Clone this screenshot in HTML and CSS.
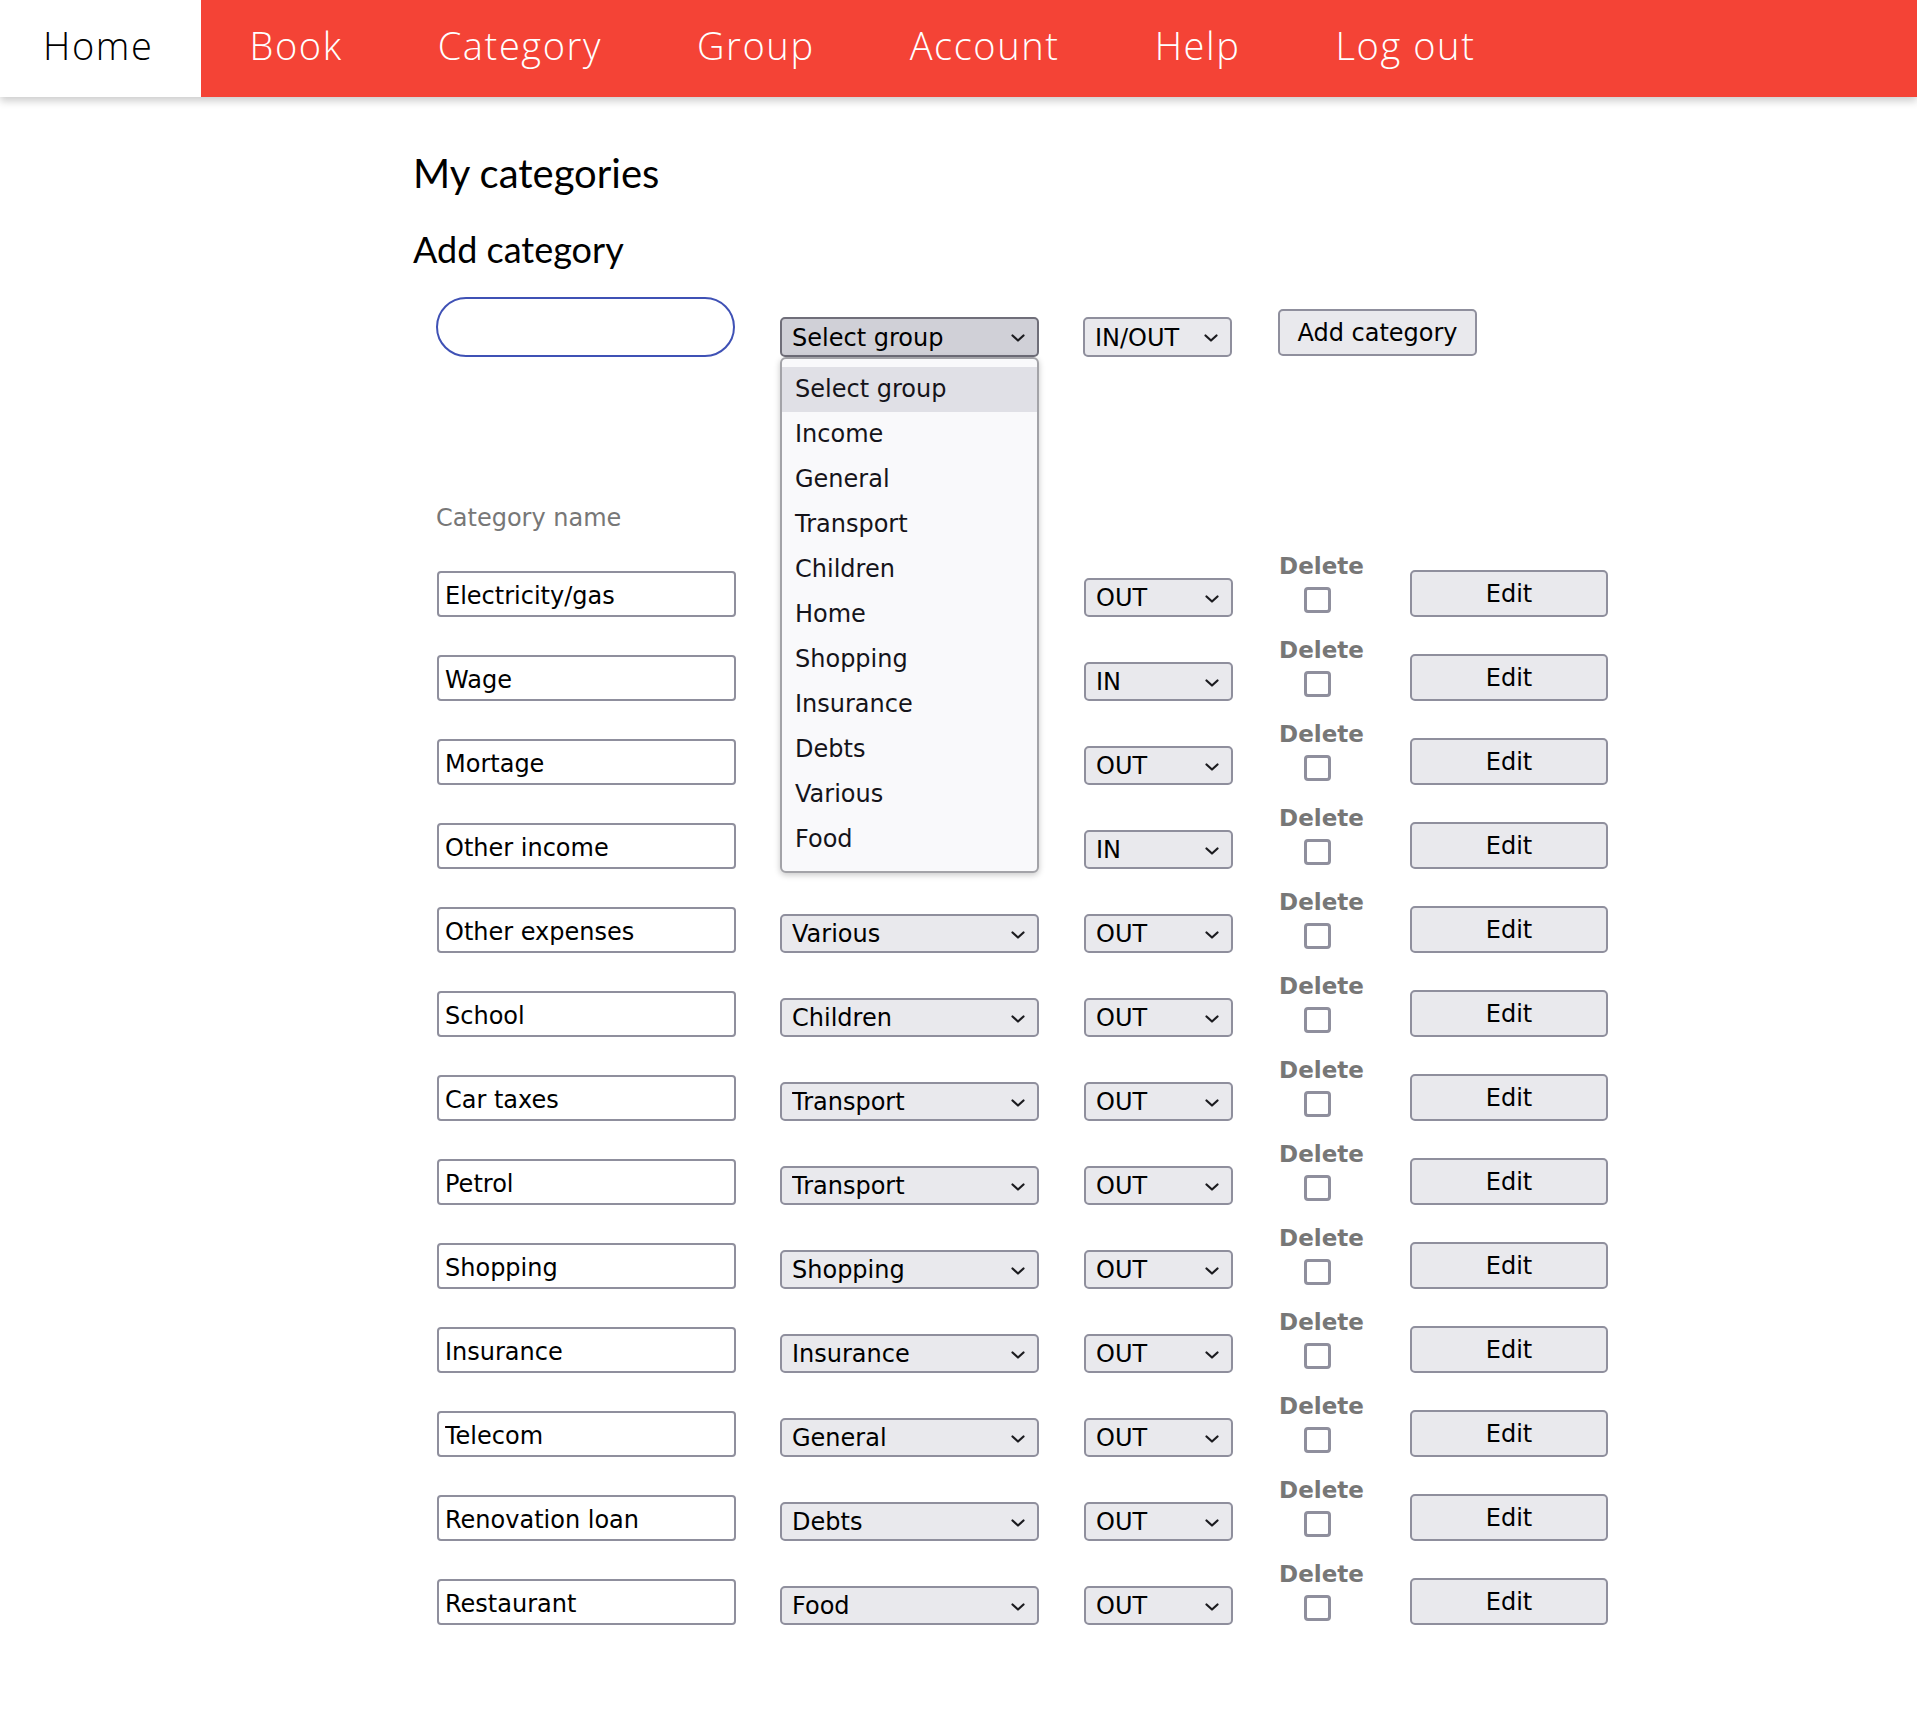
FILE: index.html
```html
<!DOCTYPE html>
<html lang="en">
<head>
<meta charset="utf-8">
<title>My categories</title>
<link rel="stylesheet" href="styles.css">
</head>
<body>
<nav class="topnav">
  <a class="nav-item nav-item--active" href="#">Home</a>
  <a class="nav-item" href="#">Book</a>
  <a class="nav-item" href="#">Category</a>
  <a class="nav-item" href="#">Group</a>
  <a class="nav-item" href="#">Account</a>
  <a class="nav-item" href="#">Help</a>
  <a class="nav-item" href="#">Log out</a>
</nav>

<main class="container">
  <h1 class="page-title">My categories</h1>
  <h2 class="section-title">Add category</h2>

  <form class="add-row">
    <input class="add-name" type="text">
    <div class="select-wrap select-wrap--group">
      <select class="select select--active"><option>Select group</option></select>
      <svg class="chevron" viewBox="0 0 14 8"><polyline points="1.5,1.5 7,6.5 12.5,1.5"/></svg>
      <ul class="dropdown">
        <li class="dropdown-item dropdown-item--hover">Select group</li>
        <li class="dropdown-item">Income</li>
        <li class="dropdown-item">General</li>
        <li class="dropdown-item">Transport</li>
        <li class="dropdown-item">Children</li>
        <li class="dropdown-item">Home</li>
        <li class="dropdown-item">Shopping</li>
        <li class="dropdown-item">Insurance</li>
        <li class="dropdown-item">Debts</li>
        <li class="dropdown-item">Various</li>
        <li class="dropdown-item">Food</li>
      </ul>
    </div>
    <div class="select-wrap select-wrap--inout">
      <select class="select"><option>IN/OUT</option></select>
      <svg class="chevron" viewBox="0 0 14 8"><polyline points="1.5,1.5 7,6.5 12.5,1.5"/></svg>
    </div>
    <button class="btn btn--add" type="button">Add category</button>
  </form>

  <div class="col-label">Category name</div>

  <div class="cat-list">
    <div class="cat-row">
      <input class="cat-name" type="text" value="Electricity/gas">
      <div class="select-wrap select-wrap--group"><select class="select"><option>Home</option></select><svg class="chevron" viewBox="0 0 14 8"><polyline points="1.5,1.5 7,6.5 12.5,1.5"/></svg></div>
      <div class="select-wrap select-wrap--inout"><select class="select"><option>OUT</option></select><svg class="chevron" viewBox="0 0 14 8"><polyline points="1.5,1.5 7,6.5 12.5,1.5"/></svg></div>
      <label class="delete-col"><span class="delete-label">Delete</span><input class="checkbox" type="checkbox"></label>
      <button class="btn btn--edit" type="button">Edit</button>
    </div>
    <div class="cat-row">
      <input class="cat-name" type="text" value="Wage">
      <div class="select-wrap select-wrap--group"><select class="select"><option>Income</option></select><svg class="chevron" viewBox="0 0 14 8"><polyline points="1.5,1.5 7,6.5 12.5,1.5"/></svg></div>
      <div class="select-wrap select-wrap--inout"><select class="select"><option>IN</option></select><svg class="chevron" viewBox="0 0 14 8"><polyline points="1.5,1.5 7,6.5 12.5,1.5"/></svg></div>
      <label class="delete-col"><span class="delete-label">Delete</span><input class="checkbox" type="checkbox"></label>
      <button class="btn btn--edit" type="button">Edit</button>
    </div>
    <div class="cat-row">
      <input class="cat-name" type="text" value="Mortage">
      <div class="select-wrap select-wrap--group"><select class="select"><option>Home</option></select><svg class="chevron" viewBox="0 0 14 8"><polyline points="1.5,1.5 7,6.5 12.5,1.5"/></svg></div>
      <div class="select-wrap select-wrap--inout"><select class="select"><option>OUT</option></select><svg class="chevron" viewBox="0 0 14 8"><polyline points="1.5,1.5 7,6.5 12.5,1.5"/></svg></div>
      <label class="delete-col"><span class="delete-label">Delete</span><input class="checkbox" type="checkbox"></label>
      <button class="btn btn--edit" type="button">Edit</button>
    </div>
    <div class="cat-row">
      <input class="cat-name" type="text" value="Other income">
      <div class="select-wrap select-wrap--group"><select class="select"><option>Income</option></select><svg class="chevron" viewBox="0 0 14 8"><polyline points="1.5,1.5 7,6.5 12.5,1.5"/></svg></div>
      <div class="select-wrap select-wrap--inout"><select class="select"><option>IN</option></select><svg class="chevron" viewBox="0 0 14 8"><polyline points="1.5,1.5 7,6.5 12.5,1.5"/></svg></div>
      <label class="delete-col"><span class="delete-label">Delete</span><input class="checkbox" type="checkbox"></label>
      <button class="btn btn--edit" type="button">Edit</button>
    </div>
    <div class="cat-row">
      <input class="cat-name" type="text" value="Other expenses">
      <div class="select-wrap select-wrap--group"><select class="select"><option>Various</option></select><svg class="chevron" viewBox="0 0 14 8"><polyline points="1.5,1.5 7,6.5 12.5,1.5"/></svg></div>
      <div class="select-wrap select-wrap--inout"><select class="select"><option>OUT</option></select><svg class="chevron" viewBox="0 0 14 8"><polyline points="1.5,1.5 7,6.5 12.5,1.5"/></svg></div>
      <label class="delete-col"><span class="delete-label">Delete</span><input class="checkbox" type="checkbox"></label>
      <button class="btn btn--edit" type="button">Edit</button>
    </div>
    <div class="cat-row">
      <input class="cat-name" type="text" value="School">
      <div class="select-wrap select-wrap--group"><select class="select"><option>Children</option></select><svg class="chevron" viewBox="0 0 14 8"><polyline points="1.5,1.5 7,6.5 12.5,1.5"/></svg></div>
      <div class="select-wrap select-wrap--inout"><select class="select"><option>OUT</option></select><svg class="chevron" viewBox="0 0 14 8"><polyline points="1.5,1.5 7,6.5 12.5,1.5"/></svg></div>
      <label class="delete-col"><span class="delete-label">Delete</span><input class="checkbox" type="checkbox"></label>
      <button class="btn btn--edit" type="button">Edit</button>
    </div>
    <div class="cat-row">
      <input class="cat-name" type="text" value="Car taxes">
      <div class="select-wrap select-wrap--group"><select class="select"><option>Transport</option></select><svg class="chevron" viewBox="0 0 14 8"><polyline points="1.5,1.5 7,6.5 12.5,1.5"/></svg></div>
      <div class="select-wrap select-wrap--inout"><select class="select"><option>OUT</option></select><svg class="chevron" viewBox="0 0 14 8"><polyline points="1.5,1.5 7,6.5 12.5,1.5"/></svg></div>
      <label class="delete-col"><span class="delete-label">Delete</span><input class="checkbox" type="checkbox"></label>
      <button class="btn btn--edit" type="button">Edit</button>
    </div>
    <div class="cat-row">
      <input class="cat-name" type="text" value="Petrol">
      <div class="select-wrap select-wrap--group"><select class="select"><option>Transport</option></select><svg class="chevron" viewBox="0 0 14 8"><polyline points="1.5,1.5 7,6.5 12.5,1.5"/></svg></div>
      <div class="select-wrap select-wrap--inout"><select class="select"><option>OUT</option></select><svg class="chevron" viewBox="0 0 14 8"><polyline points="1.5,1.5 7,6.5 12.5,1.5"/></svg></div>
      <label class="delete-col"><span class="delete-label">Delete</span><input class="checkbox" type="checkbox"></label>
      <button class="btn btn--edit" type="button">Edit</button>
    </div>
    <div class="cat-row">
      <input class="cat-name" type="text" value="Shopping">
      <div class="select-wrap select-wrap--group"><select class="select"><option>Shopping</option></select><svg class="chevron" viewBox="0 0 14 8"><polyline points="1.5,1.5 7,6.5 12.5,1.5"/></svg></div>
      <div class="select-wrap select-wrap--inout"><select class="select"><option>OUT</option></select><svg class="chevron" viewBox="0 0 14 8"><polyline points="1.5,1.5 7,6.5 12.5,1.5"/></svg></div>
      <label class="delete-col"><span class="delete-label">Delete</span><input class="checkbox" type="checkbox"></label>
      <button class="btn btn--edit" type="button">Edit</button>
    </div>
    <div class="cat-row">
      <input class="cat-name" type="text" value="Insurance">
      <div class="select-wrap select-wrap--group"><select class="select"><option>Insurance</option></select><svg class="chevron" viewBox="0 0 14 8"><polyline points="1.5,1.5 7,6.5 12.5,1.5"/></svg></div>
      <div class="select-wrap select-wrap--inout"><select class="select"><option>OUT</option></select><svg class="chevron" viewBox="0 0 14 8"><polyline points="1.5,1.5 7,6.5 12.5,1.5"/></svg></div>
      <label class="delete-col"><span class="delete-label">Delete</span><input class="checkbox" type="checkbox"></label>
      <button class="btn btn--edit" type="button">Edit</button>
    </div>
    <div class="cat-row">
      <input class="cat-name" type="text" value="Telecom">
      <div class="select-wrap select-wrap--group"><select class="select"><option>General</option></select><svg class="chevron" viewBox="0 0 14 8"><polyline points="1.5,1.5 7,6.5 12.5,1.5"/></svg></div>
      <div class="select-wrap select-wrap--inout"><select class="select"><option>OUT</option></select><svg class="chevron" viewBox="0 0 14 8"><polyline points="1.5,1.5 7,6.5 12.5,1.5"/></svg></div>
      <label class="delete-col"><span class="delete-label">Delete</span><input class="checkbox" type="checkbox"></label>
      <button class="btn btn--edit" type="button">Edit</button>
    </div>
    <div class="cat-row">
      <input class="cat-name" type="text" value="Renovation loan">
      <div class="select-wrap select-wrap--group"><select class="select"><option>Debts</option></select><svg class="chevron" viewBox="0 0 14 8"><polyline points="1.5,1.5 7,6.5 12.5,1.5"/></svg></div>
      <div class="select-wrap select-wrap--inout"><select class="select"><option>OUT</option></select><svg class="chevron" viewBox="0 0 14 8"><polyline points="1.5,1.5 7,6.5 12.5,1.5"/></svg></div>
      <label class="delete-col"><span class="delete-label">Delete</span><input class="checkbox" type="checkbox"></label>
      <button class="btn btn--edit" type="button">Edit</button>
    </div>
    <div class="cat-row">
      <input class="cat-name" type="text" value="Restaurant">
      <div class="select-wrap select-wrap--group"><select class="select"><option>Food</option></select><svg class="chevron" viewBox="0 0 14 8"><polyline points="1.5,1.5 7,6.5 12.5,1.5"/></svg></div>
      <div class="select-wrap select-wrap--inout"><select class="select"><option>OUT</option></select><svg class="chevron" viewBox="0 0 14 8"><polyline points="1.5,1.5 7,6.5 12.5,1.5"/></svg></div>
      <label class="delete-col"><span class="delete-label">Delete</span><input class="checkbox" type="checkbox"></label>
      <button class="btn btn--edit" type="button">Edit</button>
    </div>
  </div>
</main>
</body>
</html>
```

FILE: styles.css
```css
* {
  box-sizing: border-box;
}

html, body {
  margin: 0;
  padding: 0;
  background: #ffffff;
}

body {
  font-family: "DejaVu Sans", Verdana, sans-serif;
  color: #000;
}

/* ---------- top navigation ---------- */
.topnav {
  display: flex;
  height: 97px;
  background: #f44336;
  box-shadow: 0 4px 8px rgba(0, 0, 0, 0.2);
  position: relative;
  z-index: 2;
}

.nav-item {
  display: flex;
  align-items: center;
  padding: 0 47px 8px 48px;
  font-family: "Open Sans", sans-serif;
  font-weight: 300;
  font-size: 38px;
  letter-spacing: 1.6px;
  color: #ffffff;
  text-decoration: none;
}

.nav-item--active {
  background: #ffffff;
  color: #000000;
  padding-left: 43px;
  padding-right: 48px;
}

/* ---------- page ---------- */
.container {
  width: 1091px;
  margin: 0 auto;
}

.page-title {
  font-family: Lato, sans-serif;
  font-weight: 400;
  font-size: 40px;
  line-height: 1.2;
  margin: 52px 0 0;
}

.section-title {
  font-family: Lato, sans-serif;
  font-weight: 400;
  font-size: 36px;
  line-height: 1.2;
  margin: 31px 0 0;
}

/* ---------- shared controls ---------- */
.select-wrap {
  position: relative;
  flex: none;
}

.select-wrap--group {
  width: 259px;
}

.select-wrap--inout {
  width: 149px;
}

.select {
  appearance: none;
  -webkit-appearance: none;
  display: block;
  width: 100%;
  height: 39px;
  margin: 0;
  padding: 1px 36px 0 10px;
  font-family: "DejaVu Sans", Verdana, sans-serif;
  font-size: 24px;
  color: #000;
  background: #e9e9ed;
  border: 2px solid #8f8f9d;
  border-radius: 5px;
}

.select--active {
  background: #d0d0d7;
  border-color: #6f6e79;
}

.chevron {
  position: absolute;
  right: 14px;
  top: 50%;
  width: 14px;
  height: 8px;
  margin-top: -3px;
  fill: none;
  stroke: #1b1b1f;
  stroke-width: 2.2;
  stroke-linecap: round;
  stroke-linejoin: round;
  pointer-events: none;
}

.btn {
  flex: none;
  margin: 0;
  font-family: "DejaVu Sans", Verdana, sans-serif;
  font-size: 24px;
  color: #000;
  background: #e9e9ed;
  border: 2px solid #8f8f9d;
  border-radius: 5px;
  padding: 0;
}

/* ---------- add row ---------- */
.add-row {
  display: flex;
  align-items: flex-end;
  gap: 44px;
  margin-top: 26px;
  padding-left: 23px;
}

.add-name {
  flex: none;
  width: 299px;
  height: 60px;
  margin: 0 1px 0 0;
  border: 2px solid #3f51b5;
  border-radius: 30px;
  background: #fff;
  font-family: "DejaVu Sans", Verdana, sans-serif;
  font-size: 24px;
  padding: 0 20px;
}

.add-row .select {
  height: 40px;
}

.btn--add {
  width: 199px;
  height: 47px;
  margin-left: 2px;
  margin-bottom: 1px;
}

/* ---------- open dropdown ---------- */
.dropdown {
  position: absolute;
  left: 0;
  top: 100%;
  width: 259px;
  margin: 0;
  padding: 8px 0 9px;
  list-style: none;
  background: #f9f9fb;
  border: 2px solid #a3a3a8;
  border-radius: 6px;
  box-shadow: 0 2px 6px rgba(0, 0, 0, 0.22);
  z-index: 5;
}

.dropdown-item {
  height: 45px;
  line-height: 45px;
  padding-left: 13px;
  font-size: 24px;
  color: #15141a;
}

.dropdown-item--hover {
  background: #e0e0e6;
}

/* ---------- list ---------- */
.col-label {
  margin-top: 147px;
  padding-left: 23px;
  font-size: 24px;
  line-height: 28px;
  color: #777777;
}

.cat-list {
  padding-left: 23px;
}

.cat-row {
  display: flex;
  align-items: flex-end;
  gap: 45px;
  margin-top: 20px;
}

.cat-row:first-child {
  margin-top: 21px;
}

.cat-name {
  flex: none;
  width: 299px;
  height: 46px;
  margin: 0 0 0 1px;
  padding: 3px 6px 0;
  font-family: "DejaVu Sans", Verdana, sans-serif;
  font-size: 24px;
  color: #000;
  background: #fff;
  border: 2px solid #8f8f9d;
  border-radius: 4px;
}

.cat-row .select-wrap--group {
  margin-left: -1px;
}

.delete-col {
  flex: none;
  width: 87px;
  display: flex;
  flex-direction: column;
  align-items: center;
}

.delete-label {
  font-size: 23px;
  font-weight: bold;
  line-height: 26px;
  color: #777777;
}

.checkbox {
  appearance: none;
  -webkit-appearance: none;
  width: 27px;
  height: 26px;
  margin: 8px 9px 4px 0;
  background: #fff;
  border: 3px solid #8f8f9d;
  border-radius: 4px;
}

.btn--edit {
  width: 198px;
  height: 47px;
  padding-top: 1px;
}
```
